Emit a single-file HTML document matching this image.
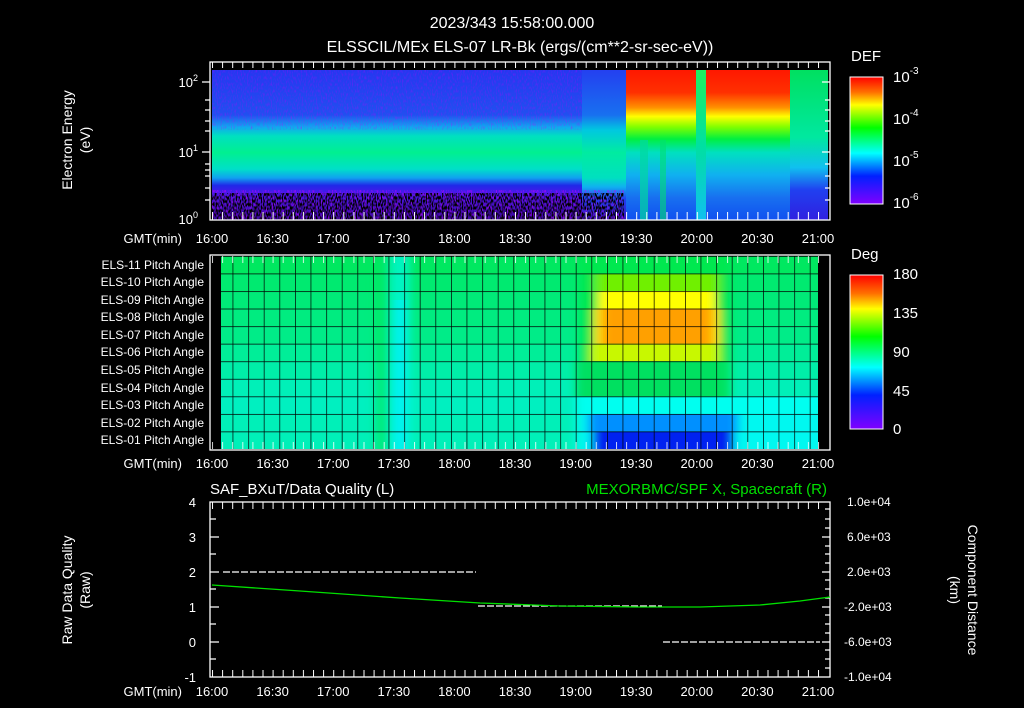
<!DOCTYPE html>
<html><head><meta charset="utf-8"><style>
html,body{margin:0;padding:0;background:#000;}
svg{display:block;font-family:"Liberation Sans",sans-serif;}
text{fill:#fff;}
</style></head><body>
<svg width="1024" height="708" viewBox="0 0 1024 708" xmlns="http://www.w3.org/2000/svg">
<defs>
<linearGradient id="gA" x1="0" y1="0" x2="0" y2="1">
<stop offset="0" stop-color="#2438f0"/><stop offset="0.3" stop-color="#2050f0"/>
<stop offset="0.38" stop-color="#10a8f0"/><stop offset="0.44" stop-color="#00e0c0"/>
<stop offset="0.55" stop-color="#00f090"/><stop offset="0.66" stop-color="#00e0c8"/>
<stop offset="0.72" stop-color="#10a0f0"/><stop offset="0.77" stop-color="#2028e8"/>
<stop offset="0.82" stop-color="#4818e8"/><stop offset="1" stop-color="#3a08a0"/>
</linearGradient>
<linearGradient id="gB" x1="0" y1="0" x2="0" y2="1">
<stop offset="0" stop-color="#2440f0"/><stop offset="0.3" stop-color="#1870f0"/>
<stop offset="0.4" stop-color="#00c8e0"/><stop offset="0.55" stop-color="#00eca0"/>
<stop offset="0.72" stop-color="#00e0c0"/><stop offset="0.78" stop-color="#10b0f0"/>
<stop offset="0.86" stop-color="#2040f0"/><stop offset="1" stop-color="#3a10c0"/>
</linearGradient>
<linearGradient id="gC" x1="0" y1="0" x2="0" y2="1">
<stop offset="0" stop-color="#ff1800"/><stop offset="0.15" stop-color="#ff3000"/>
<stop offset="0.25" stop-color="#ff9000"/><stop offset="0.31" stop-color="#ffff00"/>
<stop offset="0.38" stop-color="#80ff00"/><stop offset="0.46" stop-color="#00f040"/>
<stop offset="0.55" stop-color="#00e0c0"/><stop offset="0.7" stop-color="#10b0f0"/>
<stop offset="0.85" stop-color="#1870f0"/><stop offset="1" stop-color="#1050f0"/>
</linearGradient>
<linearGradient id="gS" x1="0" y1="0" x2="0" y2="1">
<stop offset="0" stop-color="#20f060"/><stop offset="0.5" stop-color="#00e0a0"/><stop offset="1" stop-color="#10c0f0"/>
</linearGradient>
<linearGradient id="gD" x1="0" y1="0" x2="0" y2="1">
<stop offset="0" stop-color="#00e060"/><stop offset="0.45" stop-color="#00e8a0"/>
<stop offset="0.65" stop-color="#10c0f0"/><stop offset="0.8" stop-color="#2040f0"/><stop offset="1" stop-color="#3020e0"/>
</linearGradient>
<linearGradient id="cb" x1="0" y1="0" x2="0" y2="1">
<stop offset="0" stop-color="#ff0000"/><stop offset="0.12" stop-color="#ff7000"/>
<stop offset="0.22" stop-color="#ffff00"/><stop offset="0.4" stop-color="#00ff00"/>
<stop offset="0.6" stop-color="#00ffff"/><stop offset="0.78" stop-color="#0020ff"/>
<stop offset="1" stop-color="#8000ff"/>
</linearGradient>
<filter id="nz" x="0" y="0" width="1" height="1">
<feTurbulence type="fractalNoise" baseFrequency="0.8 0.3" numOctaves="1" seed="4"/>
<feColorMatrix values="0 0 0 0 0  0 0 0 0 0  0 0 0 0 0  0 0 0 -5 2.9"/>
</filter>
<filter id="nz2" x="0" y="0" width="1" height="1">
<feTurbulence type="fractalNoise" baseFrequency="0.8 0.3" numOctaves="1" seed="9"/>
<feColorMatrix values="0 0 0 0 0.5  0 0 0 0 0  0 0 0 0 1  0 0 0 -3 1.6"/>
</filter>
<filter id="bl" x="-0.1" y="0" width="1.2" height="1"><feGaussianBlur stdDeviation="5 0"/></filter>
<clipPath id="pc"><rect x="221" y="256" width="597" height="193"/></clipPath>
<pattern id="grid" x="232.6" y="256" width="15.6" height="17.55" patternUnits="userSpaceOnUse">
<path d="M0 0V17.55M0 0H15.6" stroke="#000" stroke-width="1.4" fill="none"/>
</pattern>
<pattern id="tx" x="212" y="0" width="10.1" height="708" patternUnits="userSpaceOnUse">
<path d="M0.5 0V708" stroke="#fff" stroke-width="1"/>
</pattern>
</defs>

<text x="512" y="28" font-size="16" text-anchor="middle">2023/343 15:58:00.000</text>
<text x="520" y="52" font-size="16" text-anchor="middle">ELSSCIL/MEx ELS-07 LR-Bk  (ergs/(cm**2-sr-sec-eV))</text>

<!-- top spectrogram -->
<rect x="212" y="70" width="370" height="150" fill="url(#gA)"/>
<rect x="582" y="70" width="44" height="150" fill="url(#gB)"/>
<rect x="626" y="70" width="164" height="150" fill="url(#gC)"/>
<rect x="640" y="140" width="8" height="80" fill="#00d8a0" opacity="0.7"/>
<rect x="660" y="140" width="6" height="80" fill="#00e070" opacity="0.6"/>
<rect x="696" y="70" width="10" height="150" fill="url(#gS)"/>
<rect x="790" y="70" width="38" height="150" fill="url(#gD)"/>
<rect x="212" y="70" width="370" height="60" fill="#6010e0" filter="url(#nz2)" opacity="0.35"/>
<rect x="212" y="190" width="412" height="30" fill="#6a10f0" filter="url(#nz2)" opacity="0.8"/>
<rect x="212" y="193" width="412" height="27" fill="#000" filter="url(#nz)"/>
<rect x="210" y="62" width="620" height="158" fill="none" stroke="#fff" stroke-width="1.3"/>
<rect x="212" y="62" width="616" height="6" fill="url(#tx)"/>
<rect x="212" y="212" width="616" height="8" fill="url(#tx)"/>
<g stroke="#fff" stroke-width="1.3">
<path d="M202 82h8M205 100h5M205 110h5M205 121h5M205 131h5M202 152h8M205 164h5M205 170h5M205 176h5M205 188h5M205 200h5"/>
<path d="M830 82h-8M830 100h-5M830 110h-5M830 121h-5M830 131h-5M830 152h-8M830 164h-5M830 176h-5M830 188h-5M830 200h-5"/>
</g>
<g font-size="13" text-anchor="end">
<text x="198" y="87">10<tspan font-size="9" dy="-6">2</tspan></text>
<text x="198" y="157">10<tspan font-size="9" dy="-6">1</tspan></text>
<text x="198" y="224">10<tspan font-size="9" dy="-6">0</tspan></text>
</g>
<text transform="translate(72,140) rotate(-90)" font-size="14" text-anchor="middle">Electron Energy</text>
<text transform="translate(90,140) rotate(-90)" font-size="14" text-anchor="middle">(eV)</text>

<g font-size="13" text-anchor="middle">
<g id="tl">
<text x="212" y="0">16:00</text><text x="272.6" y="0">16:30</text><text x="333.2" y="0">17:00</text>
<text x="393.8" y="0">17:30</text><text x="454.4" y="0">18:00</text><text x="515" y="0">18:30</text>
<text x="575.6" y="0">19:00</text><text x="636.2" y="0">19:30</text><text x="696.8" y="0">20:00</text>
<text x="757.4" y="0">20:30</text><text x="818" y="0">21:00</text>
</g>
</g>
<g font-size="13" text-anchor="middle" transform="translate(0,243)"><use href="#tl"/></g>
<g font-size="13" text-anchor="middle" transform="translate(0,468)"><use href="#tl"/></g>
<g font-size="13" text-anchor="middle" transform="translate(0,696)"><use href="#tl"/></g>
<text x="182" y="243" font-size="13" text-anchor="end">GMT(min)</text>
<text x="182" y="468" font-size="13" text-anchor="end">GMT(min)</text>
<text x="182" y="696" font-size="13" text-anchor="end">GMT(min)</text>

<text x="851" y="61" font-size="15">DEF</text>
<rect x="850" y="77" width="33" height="127" fill="url(#cb)" stroke="#fff" stroke-width="1"/>
<g font-size="15">
<text x="893" y="82">10<tspan font-size="10" dy="-8">-3</tspan></text>
<text x="893" y="124">10<tspan font-size="10" dy="-8">-4</tspan></text>
<text x="893" y="166">10<tspan font-size="10" dy="-8">-5</tspan></text>
<text x="893" y="208">10<tspan font-size="10" dy="-8">-6</tspan></text>
</g>
<text x="851" y="259" font-size="15">Deg</text>
<rect x="850" y="275" width="33" height="154" fill="url(#cb)" stroke="#fff" stroke-width="1"/>
<g font-size="15">
<text x="893" y="279">180</text><text x="893" y="318">135</text><text x="893" y="357">90</text>
<text x="893" y="396">45</text><text x="893" y="434">0</text>
</g>

<!-- pitch angle panel -->
<rect x="210" y="255" width="620" height="195" fill="none" stroke="#fff" stroke-width="1.3"/>
<g clip-path="url(#pc)">
<rect x="221" y="256" width="597" height="18" fill="#00e860"/>
<rect x="221" y="273.5" width="597" height="18" fill="#00ea70"/>
<rect x="221" y="291" width="597" height="18" fill="#00ea78"/>
<rect x="221" y="308.6" width="597" height="18" fill="#00ec80"/>
<rect x="221" y="326.2" width="597" height="18" fill="#00ec88"/>
<rect x="221" y="343.7" width="597" height="18" fill="#00ee98"/>
<rect x="221" y="361.3" width="597" height="18" fill="#00eea8"/>
<rect x="221" y="378.8" width="597" height="18" fill="#00f0b8"/>
<rect x="221" y="396.4" width="597" height="18" fill="#00f0c0"/>
<rect x="221" y="414" width="597" height="18" fill="#00f0b8"/>
<rect x="221" y="431.5" width="597" height="18" fill="#00f0b8"/>
<g filter="url(#bl)">
<rect x="376" y="256" width="12" height="193" fill="#00e860" opacity="0.8"/>
<rect x="390" y="256" width="20" height="193" fill="#00f8e0" opacity="0.75"/>
<rect x="395" y="300" width="10" height="149" fill="#00f0ff" opacity="0.8"/>
<rect x="580" y="256" width="150" height="193" fill="#00e850"/>
<rect x="595" y="273.5" width="125" height="17.5" fill="#70f000"/>
<rect x="598" y="291" width="118" height="17.5" fill="#ffff00"/>
<rect x="594" y="308.6" width="126" height="35.2" fill="#ffe000"/>
<rect x="602" y="308.6" width="110" height="35.2" fill="#ffa000"/>
<rect x="590" y="343.7" width="130" height="17.5" fill="#c8f800"/>
<rect x="576" y="361.3" width="150" height="35" fill="#00e060"/>
<rect x="576" y="396.4" width="260" height="17.6" fill="#00fff0"/>
<rect x="576" y="414" width="260" height="35.5" fill="#00f8f0"/>
<rect x="588" y="414" width="150" height="17.5" fill="#0090ff"/>
<rect x="592" y="431.5" width="142" height="18" fill="#0020f0"/>
</g>
<rect x="221" y="256" width="597" height="193" fill="url(#grid)"/>
</g>
<rect x="212" y="256" width="616" height="7" fill="url(#tx)" opacity="0.8"/>
<rect x="212" y="442" width="616" height="7" fill="url(#tx)" opacity="0.8"/>
<g font-size="12" text-anchor="end">
<text x="204" y="269">ELS-11 Pitch Angle</text><text x="204" y="286">ELS-10 Pitch Angle</text>
<text x="204" y="304">ELS-09 Pitch Angle</text><text x="204" y="321">ELS-08 Pitch Angle</text>
<text x="204" y="339">ELS-07 Pitch Angle</text><text x="204" y="356">ELS-06 Pitch Angle</text>
<text x="204" y="374">ELS-05 Pitch Angle</text><text x="204" y="392">ELS-04 Pitch Angle</text>
<text x="204" y="409">ELS-03 Pitch Angle</text><text x="204" y="427">ELS-02 Pitch Angle</text>
<text x="204" y="444">ELS-01 Pitch Angle</text>
</g>

<!-- bottom panel -->
<text x="210" y="494" font-size="15">SAF_BXuT/Data Quality (L)</text>
<text x="827" y="494" font-size="15" text-anchor="end" style="fill:#00e000">MEXORBMC/SPF X, Spacecraft (R)</text>
<rect x="210" y="502" width="620" height="175" fill="none" stroke="#fff" stroke-width="1.3"/>
<rect x="212" y="502" width="616" height="7" fill="url(#tx)"/>
<rect x="212" y="670" width="616" height="7" fill="url(#tx)"/>
<g stroke="#fff" stroke-width="1.2">
<path d="M210 519h6M210 537h9M210 554h6M210 572h9M210 589h6M210 607h9M210 624h6M210 642h9M210 659h6"/>
<path d="M830 509h-5M830 519h-5M830 528h-5M830 537h-8M830 546h-5M830 554h-5M830 563h-5M830 572h-8M830 580h-5M830 589h-5M830 598h-5M830 607h-8M830 615h-5M830 624h-5M830 633h-5M830 642h-8M830 650h-5M830 659h-5M830 668h-5"/>
</g>
<g font-size="13" text-anchor="end">
<text x="196" y="507">4</text><text x="196" y="542">3</text><text x="196" y="577">2</text>
<text x="196" y="612">1</text><text x="196" y="647">0</text><text x="196" y="682">-1</text>
</g>
<g font-size="12">
<text x="847" y="506">1.0e+04</text><text x="847" y="541">6.0e+03</text><text x="847" y="576">2.0e+03</text>
<text x="844" y="611">-2.0e+03</text><text x="844" y="646">-6.0e+03</text><text x="844" y="681">-1.0e+04</text>
</g>
<path d="M223 572H476M478 606H662M663 642H820" stroke="#fff" stroke-width="1.2" stroke-dasharray="7 2" fill="none"/>
<path d="M212 585 L300 591 L400 598 L480 603 L560 606 L640 607 L700 607 L760 605 L800 601 L830 597" stroke="#00e000" stroke-width="1.3" fill="none"/>
<text transform="translate(72,590) rotate(-90)" font-size="14" text-anchor="middle">Raw Data Quality</text>
<text transform="translate(90,590) rotate(-90)" font-size="14" text-anchor="middle">(Raw)</text>
<text transform="translate(968,590) rotate(90)" font-size="14" text-anchor="middle">Component Distance</text>
<text transform="translate(950,590) rotate(90)" font-size="14" text-anchor="middle">(km)</text>
</svg>
</body></html>
